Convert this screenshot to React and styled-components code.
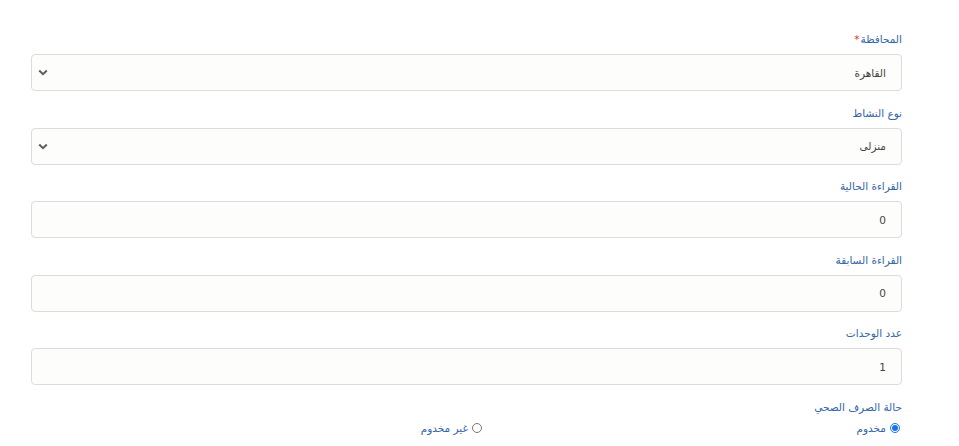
import React from "react";
import styled, { createGlobalStyle } from "styled-components";

const Global = createGlobalStyle`
  html, body { margin: 0; padding: 0; background: #fff; }
  body { font-family: "DejaVu Sans", "Noto Sans", sans-serif; }
`;

const Form = styled.form`
  direction: rtl;
  padding: 31px 57px 0 31px;
  display: flex;
  flex-direction: column;
`;

const Group = styled.div`
  display: flex;
  flex-direction: column;
  margin-bottom: 13.5px;
`;

const Label = styled.label`
  font-size: 10.5px;
  line-height: 16px;
  color: #3465a6;
  margin-bottom: 7px;
  display: flex;
  gap: 1px;
`;

const Star = styled.span`
  color: #e02b2b;
`;

const Box = styled.div`
  height: 37px;
  box-sizing: border-box;
  border: 1px solid #dcdcdc;
  border-radius: 4px;
  background: #fdfdfb;
  display: flex;
  align-items: center;
  padding: 0 15px 0 6px;
  font-size: 10.5px;
  color: #444;
`;

const Value = styled.span`
  flex: 1;
  text-align: right;
`;

const Chevron = styled.svg`
  width: 10px;
  height: 7px;
  flex: none;
`;

const Radios = styled.div`
  display: grid;
  grid-template-columns: 418px 1fr;
  padding-right: 2px;
`;

const RadioItem = styled.label`
  display: flex;
  align-items: center;
  gap: 4px;
  font-size: 10.5px;
  color: #3465a6;
`;

const Circle = styled.span`
  width: 10px;
  height: 10px;
  border-radius: 50%;
  box-sizing: border-box;
  border: 1px solid ${(p) => (p.$on ? "#1a73e8" : "#777")};
  display: inline-flex;
  align-items: center;
  justify-content: center;
  background: #fff;
  &::after {
    content: "";
    width: 6px;
    height: 6px;
    border-radius: 50%;
    background: ${(p) => (p.$on ? "#1a73e8" : "transparent")};
  }
`;

function Select({ value }) {
  return (
    <Box>
      <Value>{value}</Value>
      <Chevron viewBox="0 0 10 7">
        <path d="M1.2 1.5 L5 5.2 L8.8 1.5" fill="none" stroke="#56615c" strokeWidth="2" />
      </Chevron>
    </Box>
  );
}

function Input({ value }) {
  return (
    <Box>
      <Value>{value}</Value>
    </Box>
  );
}

export default function App() {
  return (
    <>
      <Global />
      <Form>
        <Group>
          <Label>
            المحافظة<Star>*</Star>
          </Label>
          <Select value="القاهرة" />
        </Group>
        <Group>
          <Label>نوع النشاط</Label>
          <Select value="منزلى" />
        </Group>
        <Group>
          <Label>القراءة الحالية</Label>
          <Input value="0" />
        </Group>
        <Group>
          <Label>القراءة السابقة</Label>
          <Input value="0" />
        </Group>
        <Group>
          <Label>عدد الوحدات</Label>
          <Input value="1" />
        </Group>
        <Group>
          <Label>حالة الصرف الصحي</Label>
          <Radios>
            <RadioItem>
              <Circle $on />
              مخدوم
            </RadioItem>
            <RadioItem>
              <Circle />
              غير مخدوم
            </RadioItem>
          </Radios>
        </Group>
      </Form>
    </>
  );
}
